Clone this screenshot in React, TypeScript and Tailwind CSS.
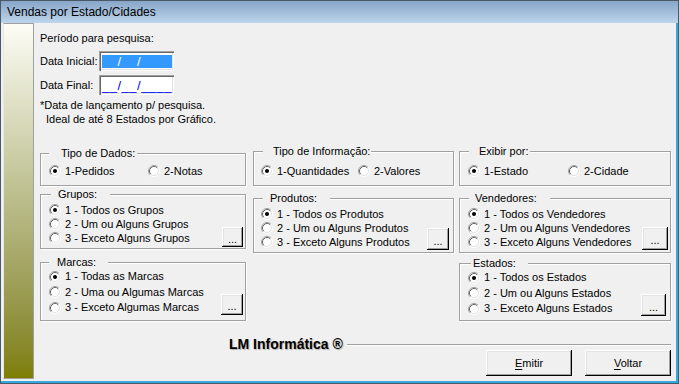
import { ReactNode } from "react";
import clsx from "clsx";

const FONT = "font-['Liberation_Sans',Arial,sans-serif]";

function Radio({ checked }: { checked?: boolean }) {
  return (
    <svg width="12" height="12" viewBox="0 0 12 12" className="shrink-0">
      <circle cx="6" cy="6" r="4.5" fill="#fff" />
      <path d="M2.11 9.89A5.5 5.5 0 0 1 9.89 2.11" fill="none" stroke="#a0a0a0" />
      <path d="M9.89 2.11A5.5 5.5 0 0 1 2.11 9.89" fill="none" stroke="#ffffff" />
      <path d="M2.82 9.18A4.5 4.5 0 0 1 9.18 2.82" fill="none" stroke="#696969" />
      <path d="M9.18 2.82A4.5 4.5 0 0 1 2.82 9.18" fill="none" stroke="#e3e3e3" />
      {checked && <circle cx="6" cy="6" r="2" fill="#000" />}
    </svg>
  );
}

function Option({ label, checked, className }: { label: string; checked?: boolean; className?: string }) {
  return (
    <div className={clsx("flex items-center gap-[4px]", className)}>
      <Radio checked={checked} />
      <span className="text-[11px] leading-[13px] whitespace-nowrap">{label}</span>
    </div>
  );
}

function Group({ title, legend, className, children }: { title: string; legend: string; className?: string; children: ReactNode }) {
  return (
    <fieldset
      className={clsx(
        "border border-[#a0a0a0] shadow-[inset_1px_1px_0_#fff,1px_1px_0_#fff]",
        className,
      )}
    >
      <legend className={clsx("bg-[#f0f0f0] text-[11px] leading-[13px] whitespace-nowrap", legend)}>{title}</legend>
      {children}
    </fieldset>
  );
}

function DotsButton({ className }: { className?: string }) {
  return (
    <button
      className={clsx(
        "shrink-0 self-end bg-[#f0f0f0] text-[11px] leading-none pt-[4px] shadow-[inset_-1px_-1px_0_#000,inset_1px_1px_0_#fff,inset_-2px_-2px_0_#a0a0a0,inset_2px_2px_0_#e3e3e3]",
        className,
      )}
    >
      ...
    </button>
  );
}

function ThreeGroup({
  title,
  legend,
  opts,
  className,
  inner,
  row,
  button,
}: {
  title: string;
  legend: string;
  opts: string[];
  className?: string;
  inner: string;
  row: string;
  button: string;
}) {
  return (
    <Group title={title} legend={legend} className={className}>
      <div className={clsx("flex", inner)}>
        <div className="flex-1 flex flex-col">
          {opts.map((o, i) => (
            <Option key={o} label={o} checked={i === 0} className={row} />
          ))}
        </div>
        <DotsButton className={button} />
      </div>
    </Group>
  );
}

function DateBox({ selected }: { selected?: boolean }) {
  return (
    <div className="w-[75px] h-[20px] bg-white flex items-center pl-[3px] shadow-[inset_1px_1px_0_#a0a0a0,inset_2px_2px_0_#696969,inset_-1px_-1px_0_#fff,inset_-2px_-2px_0_#e3e3e3]">
      <span
        className={clsx(
          "text-[13px] leading-[13px] tracking-[0.5px] whitespace-nowrap",
          selected ? "bg-[#3399ff] text-white" : "text-[#0000ff]",
        )}
      >
        __/__/____
      </span>
    </div>
  );
}

function WinButton({ hot, rest }: { hot: string; rest: string }) {
  return (
    <button className="w-[86px] h-[26px] bg-[#f0f0f0] text-[11px] shadow-[inset_-1px_-1px_0_#000,inset_1px_1px_0_#fff,inset_-2px_-2px_0_#a0a0a0,inset_2px_2px_0_#e3e3e3]">
      <span className="underline underline-offset-2">{hot}</span>
      {rest}
    </button>
  );
}

export default function App() {
  return (
    <div className={`${FONT} w-[679px] h-[384px] border border-[#4b5866] bg-[#f0f0f0] text-black flex flex-col overflow-hidden`}>
      <div className="h-[22px] shrink-0 bg-linear-to-b from-[#88a6c8] to-[#bed5ec] flex items-center pl-[6px] text-[12px]">
        Vendas por Estado/Cidades
      </div>
      <div className="flex-1 flex items-start border-r-2 border-b-2 border-[#33a9de] pl-[2px]">
        <div className="w-[31px] h-[356px] shrink-0 border border-[#a0a0a0] border-l-[#e8e8e8] bg-linear-to-b from-[#fdfdf6] to-[#7e7e00]" />
        <div className="flex-1 flex flex-col pl-[6px] pr-[5px] text-[11px]">
          <div className="mt-[9px] leading-[13px]">Período para pesquisa:</div>
          <div className="mt-[6px] flex items-center h-[20px]">
            <span className="w-[59px]">Data Inicial:</span>
            <DateBox selected />
          </div>
          <div className="mt-[4px] flex items-center h-[20px]">
            <span className="w-[59px]">Data Final:</span>
            <DateBox />
          </div>
          <div className="mt-[3px] leading-[14px]">*Data de lançamento p/ pesquisa.</div>
          <div className="leading-[14px] pl-[6px]">Ideal de até 8 Estados por Gráfico.</div>

          <div className="mt-[19px] flex items-start">
            <div className="w-[206px] flex flex-col">
              <Group title="Tipo de Dados:" legend="ml-[8px] pl-[12px] pr-[2px]" className="mt-[2px]">
                <div className="h-[25px] flex pt-[4px] pl-[8px]">
                  <Option label="1-Pedidos" checked className="w-[99px] h-[14px]" />
                  <Option label="2-Notas" className="h-[14px]" />
                </div>
              </Group>
              <ThreeGroup
                title="Grupos:"
                legend="ml-[10px] pl-[7px] pr-[13px]"
                className="mt-[2px]"
                opts={["1 - Todos os Grupos", "2 - Um ou Alguns Grupos", "3 - Exceto Alguns Grupos"]}
                inner="h-[47px] pt-[2px] pl-[8px]"
                row="h-[14px]"
                button="w-[21px] h-[20px] mb-[1px] mr-[2px]"
              />
              <ThreeGroup
                title="Marcas:"
                legend="ml-[8px] pl-[8px] pr-[12px]"
                className="mt-[7px]"
                opts={["1 - Todas as Marcas", "2 - Uma ou Algumas Marcas", "3 - Exceto Algumas Marcas"]}
                inner="h-[51px] pl-[8px]"
                row="h-[15.5px]"
                button="w-[22px] h-[21px] mb-[5px] mr-[2px]"
              />
            </div>
            <div className="ml-[7px] w-[201px] flex flex-col">
              <Group title="Tipo de Informação:" legend="ml-[9px] pl-[10px] pr-[1px]">
                <div className="h-[27px] flex pt-[6px] pl-[7px]">
                  <Option label="1-Quantidades" checked className="w-[97px] h-[14px]" />
                  <Option label="2-Valores" className="h-[14px]" />
                </div>
              </Group>
              <ThreeGroup
                title="Produtos:"
                legend="ml-[9px] pl-[7px] pr-[13px]"
                className="mt-[6px]"
                opts={["1 - Todos os Produtos", "2 - Um ou Alguns Produtos", "3 - Exceto Alguns Produtos"]}
                inner="h-[47px] pt-[2px] pl-[7px]"
                row="h-[14px]"
                button="w-[22px] h-[22px] mb-[2px] mr-[4px]"
              />
            </div>
            <div className="ml-[5px] w-[212px] flex flex-col">
              <Group title="Exibir por:" legend="ml-[9px] pl-[10px] pr-[1px]">
                <div className="h-[27px] flex pt-[6px] pl-[8px]">
                  <Option label="1-Estado" checked className="w-[100px] h-[14px]" />
                  <Option label="2-Cidade" className="h-[14px]" />
                </div>
              </Group>
              <ThreeGroup
                title="Vendedores:"
                legend="ml-[9px] pl-[6px] pr-[13px]"
                className="mt-[6px]"
                opts={["1 - Todos os Vendedores", "2 - Um ou Alguns Vendedores", "3 - Exceto Alguns Vendedores"]}
                inner="h-[47px] pt-[2px] pl-[8px]"
                row="h-[14px]"
                button="w-[26px] h-[23px] mb-[2px] mr-[2px]"
              />
              <ThreeGroup
                title="Estados:"
                legend="ml-[11px] pl-[2px] pr-[12px]"
                className="mt-[4px]"
                opts={["1 - Todos os Estados", "2 - Um ou Alguns Estados", "3 - Exceto Alguns Estados"]}
                inner="h-[50px] pl-[8px]"
                row="h-[15.5px]"
                button="w-[25px] h-[22px] mb-[4px] mr-[4px]"
              />
            </div>
          </div>

          <div className="mt-[18px] h-[11px] flex items-center">
            <span className="ml-[189px] text-[14px] leading-[11px] font-bold whitespace-nowrap [text-shadow:1px_1px_1px_#b0b0b0]">
              LM Informática ®
            </span>
            <div className="ml-[4px] flex-1 h-[2px] border-t border-[#a0a0a0] border-b border-b-white" />
          </div>
          <div className="flex justify-end gap-[13px]">
            <WinButton hot="E" rest="mitir" />
            <WinButton hot="V" rest="oltar" />
          </div>
        </div>
      </div>
    </div>
  );
}
